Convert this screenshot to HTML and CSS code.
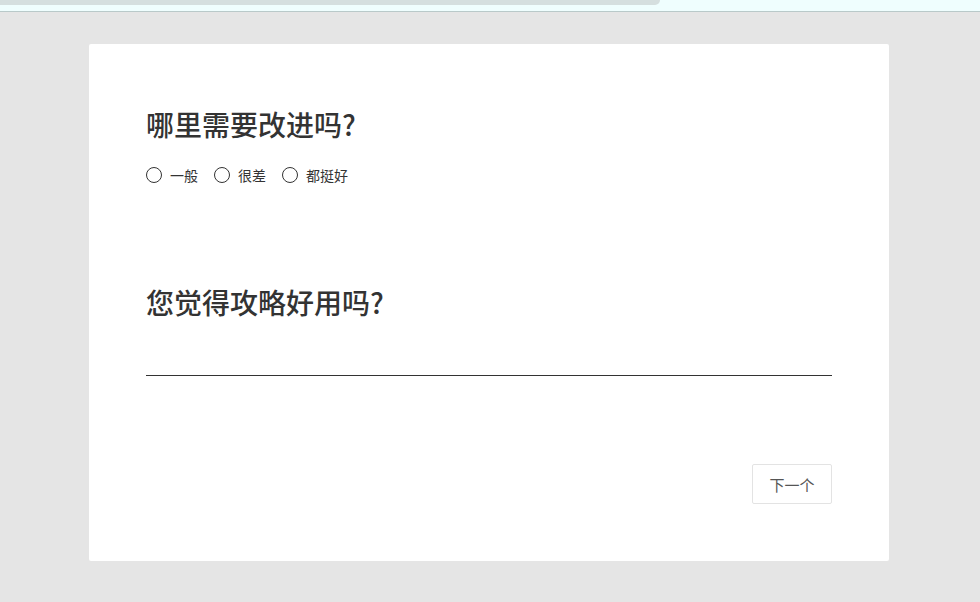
FILE: index.html
```html
<!DOCTYPE html>
<html lang="zh-CN">
<head>
<meta charset="UTF-8">
<meta name="viewport" content="width=device-width, initial-scale=1.0">
<title>问卷</title>
<link rel="stylesheet" href="styles.css">
</head>
<body>
    <div class="topbar"><div class="tab"></div></div>
    <div class="card">
        <div class="question">
            <h2>哪里需要改进吗?</h2>
            <div class="options">
                <label class="option"><input type="radio" name="improve"> 一般</label>
                <label class="option"><input type="radio" name="improve"> 很差</label>
                <label class="option"><input type="radio" name="improve"> 都挺好</label>
            </div>
        </div>
        <div class="question second">
            <h2>您觉得攻略好用吗?</h2>
            <input type="text" class="answer">
        </div>
        <div class="actions">
            <button class="next">下一个</button>
        </div>
    </div>
</body>
</html>
```

FILE: styles.css
```css
body {
    margin: 0;
    padding: 0;
    background-color: #e5e5e5;
    font-family: "Noto Sans CJK SC", "Noto Sans", sans-serif;
    color: #333;
}
.topbar {
    height: 11px;
    background-color: #effefe;
    border-bottom: 1px solid #b9c9c9;
}
.tab {
    width: 660px;
    height: 5px;
    background-color: #d5dfdf;
    border-bottom-right-radius: 8px;
}
.card {
    width: 800px;
    margin: 32px 0 0 89px;
    background-color: #fff;
    border-radius: 2px;
    padding: 60px 57px 57px;
    box-sizing: border-box;
}
.question h2 {
    font-size: 28px;
    font-weight: 500;
    line-height: 40px;
    margin: 0 0 21px;
    color: #333;
}
.options {
    display: flex;
    gap: 16px;
    font-size: 14px;
    line-height: 20px;
}
.option {
    display: flex;
    align-items: center;
    gap: 8px;
}
.option input {
    width: 16px;
    height: 16px;
    margin: 0;
    appearance: none;
    border: 1px solid #333;
    border-radius: 50%;
}
.question.second {
    margin-top: 97px;
}
.question.second h2 {
    margin-bottom: 0;
}
.answer {
    display: block;
    width: 100%;
    border: none;
    border-bottom: 1px solid #333;
    height: 54px;
    padding: 0;
    margin: 0;
    outline: none;
    box-sizing: border-box;
}
.actions {
    display: flex;
    justify-content: flex-end;
    margin-top: 88px;
}
.next {
    width: 80px;
    height: 40px;
    background-color: #fff;
    border: 1px solid #e3e3e3;
    border-radius: 2px;
    font-family: inherit;
    font-size: 15px;
    color: #555;
}
```
